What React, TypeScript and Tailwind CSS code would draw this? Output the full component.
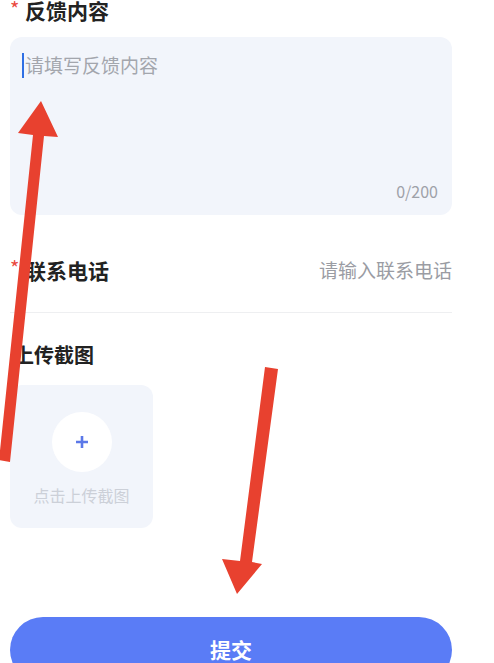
const font = { fontFamily: '"Noto Sans CJK SC", "Noto Sans", sans-serif' };

function Star() {
  return (
    <span className="mr-[4px] inline-block w-[11px] text-[20px] leading-[20px] text-[#ea4a3f] font-normal relative top-[-2px]">
      *
    </span>
  );
}

function Arrows() {
  return (
    <svg
      className="pointer-events-none absolute left-0 top-0"
      width="494"
      height="663"
      viewBox="0 0 494 663"
    >
      <polygon
        fill="#e8412f"
        points="41,101 58,137 44,136 10,462 -1,460 33,135 18,133"
      />
      <polygon
        fill="#e8412f"
        points="265,367 278,369 252,562 262,564 237,594 222,559 240,561"
      />
    </svg>
  );
}

export default function App() {
  return (
    <div
      className="relative h-[663px] w-[494px] overflow-hidden bg-white"
      style={font}
    >
      <div className="pl-[10px] pr-[42px]">
        <div className="mt-0 flex items-center text-[21px] leading-[21px] font-bold text-[#222]">
          <Star />
          反馈内容
        </div>

        <div className="mt-[16px] h-[178px] rounded-[12px] bg-[#f2f5fb] px-[12px] pt-[15px] relative">
          <div className="flex items-center text-[19px] leading-[26px] text-[#a3a6ad]">
            <span className="mr-[1px] inline-block h-[25px] w-[2px] bg-[#2f6fe4]" />
            请填写反馈内容
          </div>
          <div className="absolute bottom-[14px] right-[14px] text-[16px] leading-[20px] text-[#9ea1a8]">
            0/200
          </div>
        </div>

        <div className="flex items-center justify-between border-b border-[#eeeff1] pt-[45px] pb-[32px]">
          <div className="flex items-center text-[21px] leading-[20px] font-bold text-[#222]">
            <Star />
            联系电话
          </div>
          <div className="text-[19px] leading-[20px] text-[#9a9ca3]">
            请输入联系电话
          </div>
        </div>

        <div className="mt-[32px] pl-[4px] text-[20px] leading-[20px] font-bold text-[#222]">
          上传截图
        </div>

        <div className="mt-[20px] flex h-[143px] w-[143px] flex-col items-center rounded-[12px] bg-[#f2f5fb]">
          <div className="mt-[27px] flex h-[60px] w-[60px] items-center justify-center rounded-full bg-white">
            <svg width="14" height="14" viewBox="0 0 14 14">
              <path
                d="M7 1v12M1 7h12"
                stroke="#5b78e8"
                strokeWidth="2.6"
                strokeLinecap="butt"
              />
            </svg>
          </div>
          <div className="mt-[13px] text-[16px] leading-[20px] text-[#ccd0d8]">
            点击上传截图
          </div>
        </div>

        <button className="mt-[89px] flex h-[66px] w-full items-center justify-center rounded-full bg-[#5a7cf6] text-[21px] font-bold text-white">
          提交
        </button>
      </div>
      <Arrows />
    </div>
  );
}
